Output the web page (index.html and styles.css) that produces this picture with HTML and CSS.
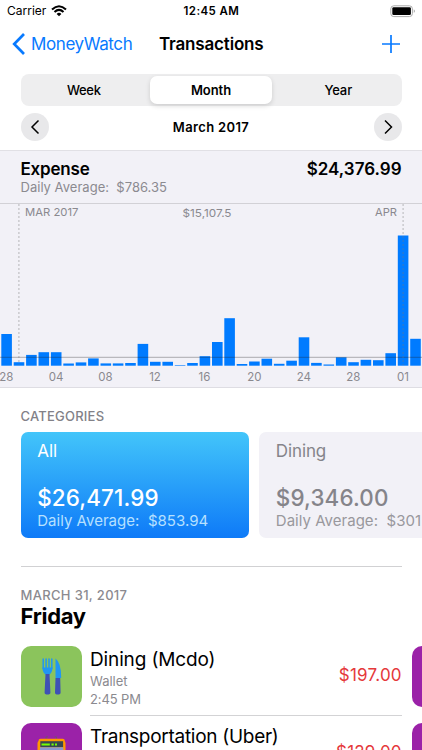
FILE: index.html
```html
<!DOCTYPE html>
<html lang="en">
<head>
<meta charset="utf-8">
<meta name="viewport" content="width=device-width">
<title>Transactions</title>
<link rel="stylesheet" href="styles.css">
</head>
<body>
<div class="screen">
  <header class="status">
    <div class="carrier"><span class="t-carrier">Carrier</span>
      <svg width="16" height="12" viewBox="0 0 16 12" fill="none" stroke="#000" stroke-width="2.1"><path d="M1 4.5Q8-2 15 4.5M3.5 7Q8 2.8 12.5 7"/><path d="M5.6 8.9Q8 6.8 10.4 8.9L8 11.3Z" fill="#000" stroke="none"/></svg>
    </div>
    <span class="t-clock">12:45 AM</span>
    <svg class="battery" width="26" height="13" viewBox="0 0 26 13"><rect x=".8" y=".8" width="21.6" height="10.8" rx="3" fill="none" stroke="#aaa"/><rect x="2.3" y="2.3" width="18.6" height="7.8" rx="1.3"/><path d="M23.8 4.3q2 1.8 0 3.6z" fill="#999"/></svg>
  </header>
  <nav class="nav">
    <div class="back"><svg width="14" height="22" viewBox="0 0 14 22" fill="none" stroke="#087aff" stroke-width="2.7"><path d="M12 1 2.2 11 12 21"/></svg><span class="t-back">MoneyWatch</span></div>
    <h1 class="t-title">Transactions</h1>
    <svg class="plus" width="18" height="18" viewBox="0 0 18 18" stroke="#087aff" stroke-width="1.7"><path d="M9 0v18M0 9h18"/></svg>
  </nav>
  <div class="segments"><span class="t-week">Week</span><span class="selected"><b class="t-month">Month</b></span><span class="t-year">Year</span></div>
  <div class="period">
    <span class="round"><svg width="28" height="28" fill="none" stroke="#000" stroke-width="1.5"><path d="M17.5 7.5 11 14l6.5 6.5"/></svg></span>
    <strong class="t-period">March 2017</strong>
    <span class="round"><svg width="28" height="28" fill="none" stroke="#000" stroke-width="1.5"><path d="m11 7.5 6.5 6.5-6.5 6.5"/></svg></span>
  </div>
  <section class="report">
    <div class="summary">
      <div><h2 class="t-expense">Expense</h2><p class="t-avg">Daily Average:&nbsp; $786.35</p></div>
      <strong class="t-total">$24,376.99</strong>
    </div>
    <svg class="chart" width="422" height="183" viewBox="0 204 422 183">
      <g fill="#007bff">
        <rect x="1.3" y="334" width="10.6" height="31.7"/><rect x="13.7" y="362.2" width="10.6" height="3.5"/><rect x="26.1" y="354.9" width="10.6" height="10.8"/><rect x="38.5" y="352.2" width="10.6" height="13.5"/><rect x="50.9" y="352.2" width="10.6" height="13.5"/><rect x="63.3" y="363.5" width="10.6" height="2.2"/><rect x="75.7" y="362.4" width="10.6" height="3.3"/><rect x="88.1" y="358.4" width="10.6" height="7.3"/><rect x="100.5" y="363.4" width="10.6" height="2.3"/><rect x="112.8" y="363.4" width="10.6" height="2.3"/><rect x="125.2" y="363" width="10.6" height="2.7"/><rect x="137.6" y="343.9" width="10.6" height="21.8"/><rect x="150" y="361.8" width="10.6" height="3.9"/><rect x="162.4" y="361.8" width="10.6" height="3.9"/><rect x="174.8" y="365.1" width="10.6" height=".6"/><rect x="187.2" y="363" width="10.6" height="2.7"/><rect x="199.6" y="356.2" width="10.6" height="9.5"/><rect x="212" y="342" width="10.6" height="23.7"/><rect x="224.3" y="318.2" width="10.6" height="47.5"/><rect x="236.7" y="364" width="10.6" height="1.7"/><rect x="249.1" y="361.5" width="10.6" height="4.2"/><rect x="261.5" y="358.7" width="10.6" height="7"/><rect x="273.9" y="363.8" width="10.6" height="1.9"/><rect x="286.3" y="360.7" width="10.6" height="5"/><rect x="298.7" y="337.3" width="10.6" height="28.4"/><rect x="311.1" y="362.9" width="10.6" height="2.8"/><rect x="323.5" y="364.5" width="10.6" height="1.2"/><rect x="335.9" y="357.3" width="10.6" height="8.4"/><rect x="348.2" y="362.2" width="10.6" height="3.5"/><rect x="360.6" y="359.8" width="10.6" height="5.9"/><rect x="373" y="360.2" width="10.6" height="5.5"/><rect x="385.4" y="353.2" width="10.6" height="12.5"/><rect x="397.8" y="235.5" width="10.6" height="130.2"/><rect x="410.2" y="338.8" width="10.6" height="26.9"/>
      </g>
      <path d="M0 357.3H422" stroke="#222" stroke-opacity=".42" stroke-width=".8"/>
      <path d="M18.9 204V365M403.1 204V365" stroke="#777" stroke-opacity=".4" stroke-width="1.2" stroke-dasharray="2 2"/>
      <g class="chart-text">
        <text x="25" y="216" textLength="53.5" lengthAdjust="spacingAndGlyphs">MAR 2017</text><text x="182.5" y="217" textLength="49" lengthAdjust="spacingAndGlyphs">$15,107.5</text><text x="375" y="216" textLength="22" lengthAdjust="spacingAndGlyphs">APR</text>
        <g text-anchor="middle"><text x="6.4" y="381">28</text><text x="56" y="381">04</text><text x="105.5" y="381">08</text><text x="155" y="381">12</text><text x="204.5" y="381">16</text><text x="254.3" y="381">20</text><text x="303.8" y="381">24</text><text x="353.4" y="381">28</text><text x="403" y="381">01</text></g>
      </g>
    </svg>
  </section>
  <h3 class="categories-title"><span class="t-categories">CATEGORIES</span></h3>
  <div class="cards">
    <article class="card active"><h4 class="t-all">All</h4><strong class="t-amount1">$26,471.99</strong><p class="t-cardavg">Daily Average:&nbsp; $853.94</p></article>
    <article class="card"><h4 class="t-dining">Dining</h4><strong class="t-amount2">$9,346.00</strong><p class="t-cardavg">Daily Average:&nbsp; $301</p></article>
  </div>
  <div class="day"><p class="t-date">MARCH 31, 2017</p><h2 class="t-day">Friday</h2></div>
  <div class="transactions">
    <div class="row">
      <span class="icon food"><svg width="61" height="61" viewBox="0 0 61 61"><path d="M22.2 13v9.5M25.1 13v9.5M28 13v9.5M30.8 13v9.5" stroke="#2196f3" stroke-width="1.5" stroke-linecap="round"/><path d="M21.4 21.5h10.2q-.3 5-3 7h-4.2q-2.8-2-3-7Z" fill="#2196f3"/><path d="M34.5 12.6q5.8 4.2 5.7 19.4h-5.7Z" fill="#2196f3"/><path d="M24.5 28h4l.9 18.5q0 2-2.9 2t-2.9-2ZM34.5 32h4.7l.4 14.5q0 2-2.8 2t-2.8-2Z" fill="#3f51b5"/></svg></span>
      <div class="detail"><div><h4 class="t-mcdo">Dining (Mcdo)</h4><p class="t-wallet">Wallet</p><p class="t-time">2:45 PM</p></div><span class="t-price1">$197.00</span></div>
      <span class="icon next"></span>
    </div>
    <div class="row">
      <span class="icon transport"><svg width="61" height="61" viewBox="0 0 61 61"><path d="M25 16v-2.2h2M35.5 16v-2.2h-2" fill="none" stroke="#75536b"/><rect x="16.5" y="18" width="28" height="34" rx="2" fill="#ff9800"/><path d="M19.5 15.8h22.3q2 0 2 2V22H17.5v-4.2q0-2 2-2Z" fill="#ff9800"/><rect x="19.3" y="18.2" width="22.8" height="6" fill="#37474f"/><path d="M20.5 21.4h8.3M30.5 21.4h2.2M34 21.4h2" stroke="#76ff03" stroke-width="2"/><rect x="19" y="24.3" width="23.3" height="15" fill="#8999d1"/></svg></span>
      <div class="detail"><div><h4 class="t-uber">Transportation (Uber)</h4></div><span class="t-price2">$129.00</span></div>
      <span class="icon next"></span>
    </div>
  </div>
</div>
</body>
</html>
```
FILE: styles.css
```css
* { box-sizing: border-box; margin: 0; padding: 0; }
body { overflow: hidden; background: #fff; color: #000; font-family: Inter, "Liberation Sans", sans-serif; }
svg { display: block; flex: none; }
h1, h2, h3, h4, p, strong, span { white-space: nowrap; }
p, h1, h2, h3, h4 { width: max-content; }
.screen { width: 422px; height: 750px; overflow: hidden; }
.status { height: 22px; padding: 0 6px 0 7px; display: grid; grid-template-columns: 1fr auto 1fr; align-items: center; font-size: 12px; line-height: 22px; }
.carrier { display: flex; gap: 5px; align-items: center; }
.t-clock { font-weight: 600; font-size: 11.5px; letter-spacing: .42px; }
.battery { justify-self: end; }
.nav { height: 44px; padding: 0 22px 0 12px; display: grid; grid-template-columns: 147px 1fr auto; align-items: center; }
.back { display: flex; gap: 5px; align-items: center; color: #087aff; font-size: 17px; line-height: 22px; letter-spacing: -.4px; }
.t-title { font-size: 17px; font-weight: 600; line-height: 22px; letter-spacing: -.17px; }
.plus { justify-self: end; }
.segments { width: 381px; height: 32px; margin: 8px 0 0 20.5px; padding: 2px 0; border-radius: 8px; background: #eeeeef; display: grid; grid-template-columns: 1fr 122px 1fr; align-items: center; text-align: center; font-size: 13px; font-weight: 500; }
.t-week { margin-right: 3px; letter-spacing: -.3px; }
.t-year { margin-left: 3px; letter-spacing: -.1px; }
.selected { height: 28px; line-height: 28px; border-radius: 7px; background: #fff; box-shadow: 0 2px 5px #00000024; }
.selected b { font-weight: 600; letter-spacing: -.05px; }
.period { margin: 7px 20.5px 0; height: 28px; display: flex; justify-content: space-between; align-items: center; font-size: 13px; }
.t-period { font-weight: 600; letter-spacing: .35px; }
.round { width: 28px; height: 28px; border-radius: 50%; background: #e8e8ea; }
.report { margin-top: 9px; height: 238px; background: #f2f1f7; border-top: 1px solid #e1e0e5; border-bottom: 1px solid #dedde3; }
.summary { height: 53px; padding: 7px 20.5px 0; display: flex; justify-content: space-between; border-bottom: 1px solid #d2d1d6; font-size: 17px; line-height: 22px; }
.summary h2, .summary strong { font-size: 17px; font-weight: 600; }
.summary h2 { letter-spacing: -.2px; }
.summary p { margin-top: -1px; font-size: 13px; line-height: 16px; color: #8b8a90; letter-spacing: .02px; }
.chart-text { fill: #8a898f; font-size: 11.5px; }
.chart-text > text { font-size: 11px; }
.categories-title { margin: 20px 20.5px 0; font-size: 13px; font-weight: 500; line-height: 16px; color: #828187; letter-spacing: .22px; }
.cards { margin: 8px 0 0 20.7px; display: flex; gap: 10.6px; }
.card { flex: none; width: 228px; height: 106px; padding: 8px 16.5px; border-radius: 7px; background: #f2f1f7; color: #85848a; }
.card h4 { font-size: 17px; font-weight: 400; line-height: 22px; }
.card .t-dining { letter-spacing: -.1px; }
.card strong { display: block; width: max-content; margin-top: 22px; font-size: 22.4px; font-weight: 500; line-height: 28px; letter-spacing: .15px; }
.card p { font-size: 15px; line-height: 18px; color: #99989d; letter-spacing: .03px; }
.active { color: #fff; background: linear-gradient(#43c5fa, #0e7af8); }
.active p { color: #b6e0ff; }
.day { margin: 28px 20.5px 0; border-top: 1px solid #d1d1d3; padding-top: 20px; height: 80px; }
.day p { font-size: 13px; font-weight: 500; line-height: 16px; color: #8b8a8f; letter-spacing: .33px; }
.day h2 { margin-top: -1px; font-size: 22px; font-weight: 700; line-height: 28px; letter-spacing: -.3px; }
.row { height: 77px; margin-left: 20.7px; display: flex; }
.icon { flex: none; width: 61px; height: 61px; border-radius: 10px; }
.food { background: #8bc45c; }
.transport, .next { background: #9b22a8; }
.detail { flex: none; width: 311.8px; height: 70px; margin-left: 8.3px; border-bottom: 1px solid #d3d3d5; display: flex; justify-content: space-between; }
.next { margin-left: 10.1px; }
.detail h4 { font-size: 19px; font-weight: 400; line-height: 27px; letter-spacing: -.13px; }
.detail .t-uber { letter-spacing: -.28px; }
.detail p { font-size: 13px; line-height: 17px; color: #8b8a8f; }
.detail .t-time { margin-top: 1px; letter-spacing: -.1px; }
.detail > span { margin-top: 19px; font-size: 17px; line-height: 20px; color: #e5393b; letter-spacing: .22px; }
```
